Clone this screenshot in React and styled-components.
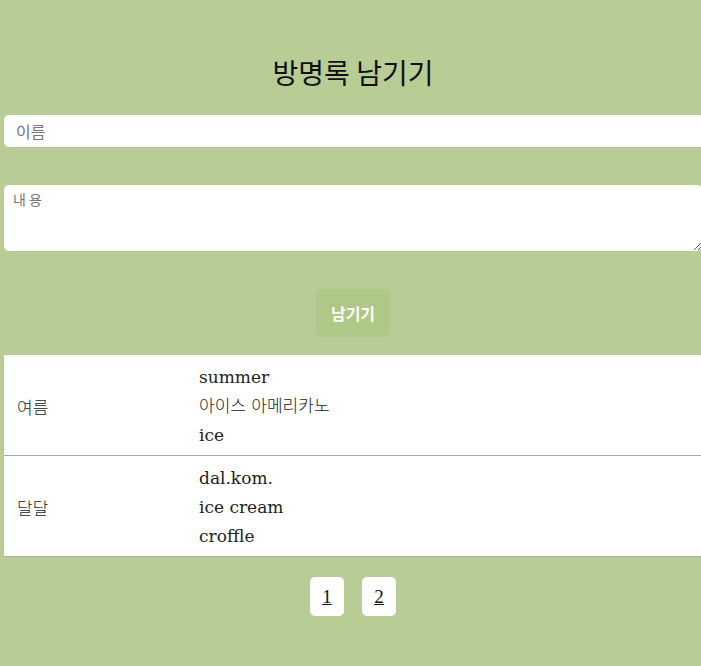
import React from "react";
import styled, { createGlobalStyle } from "styled-components";

const Global = createGlobalStyle`
  html, body {
    margin: 0;
    padding: 0;
    overflow-x: hidden;
    background: #b7cd95;
  }
  body {
    font-family: "Liberation Serif", "Noto Sans CJK KR", serif;
    min-height: 666px;
  }
`;

const Page = styled.div`
  width: 698px;
  margin-left: 4px;
  padding-top: 55px;
  display: flex;
  flex-direction: column;
  align-items: stretch;
`;

const Title = styled.h1`
  margin: 0;
  text-align: center;
  font-family: "Noto Sans CJK KR", sans-serif;
  font-weight: 400;
  font-size: 28px;
  line-height: 34px;
  color: #111;
`;

const Form = styled.form`
  display: flex;
  flex-direction: column;
  align-items: stretch;
  margin-top: 26px;
`;

const NameInput = styled.input`
  box-sizing: border-box;
  width: 720px;
  height: 32px;
  border: none;
  border-radius: 5px;
  padding: 0 12px;
  font-family: "Noto Sans CJK KR", sans-serif;
  font-size: 16px;
  background: #fff;
  outline: none;
  &::placeholder {
    color: #777;
  }
`;

const Content = styled.textarea`
  box-sizing: border-box;
  width: 698px;
  height: 66px;
  margin-top: 38px;
  border: none;
  border-radius: 5px;
  padding: 4px 9px;
  font-family: "DejaVu Sans Mono", "Noto Sans CJK KR", monospace;
  font-size: 14px;
  letter-spacing: 3px;
  background: #fff;
  outline: none;
  resize: both;
  &::placeholder {
    color: #777;
  }
`;

const SubmitButton = styled.button`
  align-self: center;
  margin-top: 38px;
  width: 74px;
  height: 48px;
  border: none;
  border-radius: 5px;
  background: #adc887;
  color: #fff;
  font-family: "Noto Sans CJK KR", sans-serif;
  font-weight: 700;
  font-size: 16px;
  cursor: pointer;
`;

const List = styled.div`
  margin-top: 18px;
  background: #fff;
  display: flex;
  flex-direction: column;
`;

const Row = styled.div`
  display: grid;
  grid-template-columns: 182px 1fr;
  align-items: center;
  padding: 8px 0 5px 13px;
  border-bottom: 1px solid #aaa;
  font-size: 18px;
  color: #222;
`;

const Name = styled.div`
  font-family: "Noto Sans CJK KR", sans-serif;
  font-weight: 300;
  font-size: 17px;
`;

const Lines = styled.div`
  display: flex;
  flex-direction: column;
`;

const Line = styled.div`
  line-height: 29px;
  font-family: "DejaVu Serif", "Noto Sans CJK KR", serif;
  font-size: 17px;
  font-weight: 300;
`;

const Pager = styled.nav`
  display: flex;
  justify-content: center;
  gap: 18px;
  margin-top: 20px;
`;

const PageLink = styled.a`
  width: 34px;
  height: 39px;
  display: flex;
  align-items: center;
  justify-content: center;
  background: #fff;
  border-radius: 5px;
  color: #111;
  font-family: "Liberation Serif", serif;
  font-size: 19px;
  text-decoration: underline;
`;

const entries = [
  { name: "여름", lines: ["summer", "아이스 아메리카노", "ice"] },
  { name: "달달", lines: ["dal.kom.", "ice cream", "croffle"] },
];

export default function App() {
  return (
    <>
      <Global />
      <Page>
        <Title>방명록 남기기</Title>
        <Form onSubmit={(e) => e.preventDefault()}>
          <NameInput placeholder="이름" />
          <Content placeholder="내용" />
          <SubmitButton type="submit">남기기</SubmitButton>
        </Form>
        <List>
          {entries.map((e) => (
            <Row key={e.name}>
              <Name>{e.name}</Name>
              <Lines>
                {e.lines.map((l) => (
                  <Line key={l}>{l}</Line>
                ))}
              </Lines>
            </Row>
          ))}
        </List>
        <Pager>
          <PageLink href="#">1</PageLink>
          <PageLink href="#">2</PageLink>
        </Pager>
      </Page>
    </>
  );
}
